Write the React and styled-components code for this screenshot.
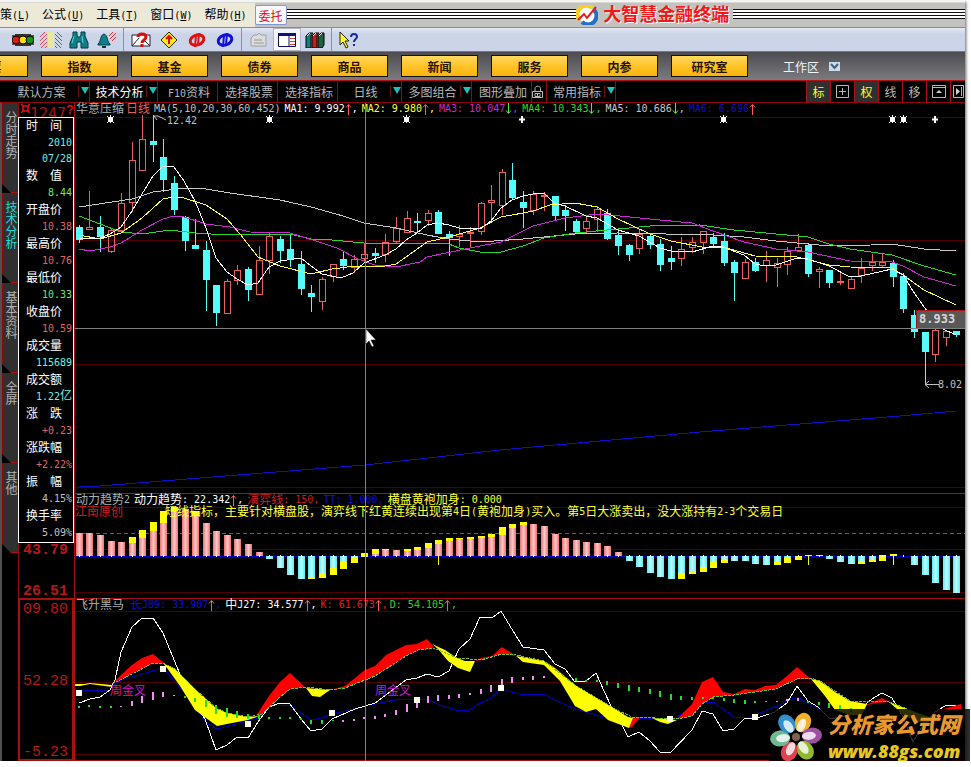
import React from "react";
import styled, { createGlobalStyle, css } from "styled-components";

const CJK = `"Liberation Sans", "Noto Sans CJK SC", sans-serif`;
const MONO = `"DejaVu Sans Mono", "Noto Sans CJK SC", monospace`;

const menus = [
  ["策", "L"],
  ["公式", "U"],
  ["工具", "T"],
  ["窗口", "W"],
  ["帮助", "H"],
];

const sections = ["股票", "指数", "基金", "债券", "商品", "新闻", "服务", "内参", "研究室"];

const views = [
  { label: "默认方案", width: 88, drop: true },
  { label: "技术分析", width: 68, drop: true, active: true },
  { label: "F10资料", width: 60 },
  { label: "选择股票", width: 60 },
  { label: "选择指标", width: 60 },
  { label: "日线", width: 64, drop: true },
  { label: "多图组合", width: 70, drop: true },
  { label: "图形叠加", width: 60 },
  { label: "lock", width: 15 },
  { label: "常用指标", width: 69, drop: true },
];

const sideTabs = [
  { label: "分时走势" },
  { label: "技术分析", active: true },
  { label: "基本资料" },
  { label: "全屏" },
  { label: "其他" },
];

const colors = {
  cyan: "#54fcfc",
  red: "#ff5c5c",
  green: "#54e454",
  grey: "#c0c0c0",
};

const quote = [
  ["时　间", ["2010", "07/28"], "#6ff0e0"],
  ["数　值", ["8.44"], "#6fe46f"],
  ["开盘价", ["10.38"], "#e06464"],
  ["最高价", ["10.76"], "#e06464"],
  ["最低价", ["10.33"], "#6fe46f"],
  ["收盘价", ["10.59"], "#e06464"],
  ["成交量", ["115689"], "#6ff0e0"],
  ["成交额", ["1.22亿"], "#6ff0e0"],
  ["涨　跌", ["+0.23"], "#e06464"],
  ["涨跌幅", ["+2.22%"], "#e06464"],
  ["振　幅", ["4.15%"], "#c0c0c0"],
  ["换手率", ["5.09%"], "#c0c0c0"],
];

const averages = [
  ["MA1: 9.992", "up", "#ffffff"],
  ["MA2: 9.980", "up", "#ffff40"],
  ["MA3: 10.047", "down", "#c828d0"],
  ["MA4: 10.343", "down", "#28d828"],
  ["MA5: 10.686", "down", "#c8c8c8"],
  ["MA6: 6.696", "up", "#1010c8"],
];

// rising flag, high, body top, body bottom, low
const candles = [
  [0, 225, 227, 240, 243], [1, 191, 227, 230, 230], [0, 216, 227, 237, 252],
  [1, 228, 230, 252, 253], [1, 193, 203, 231, 233], [1, 142, 160, 203, 212],
  [1, 115, 139, 171, 171], [0, 115, 141, 145, 162], [0, 139, 157, 180, 192],
  [0, 176, 183, 210, 215], [0, 216, 217, 241, 251], [0, 219, 245, 249, 249],
  [0, 241, 250, 280, 311], [0, 285, 285, 313, 326], [1, 279, 281, 314, 314],
  [1, 265, 270, 281, 285], [0, 267, 269, 290, 301], [1, 246, 260, 295, 295],
  [1, 232, 236, 261, 274], [0, 236, 239, 251, 263], [0, 233, 249, 259, 267],
  [0, 251, 264, 289, 295], [0, 285, 293, 297, 312], [1, 277, 279, 302, 310],
  [1, 264, 264, 277, 282], [0, 252, 259, 266, 270], [1, 255, 259, 268, 273],
  [1, 243, 254, 259, 263], [0, 248, 253, 256, 263], [1, 234, 242, 255, 262],
  [1, 217, 228, 242, 243], [1, 211, 218, 233, 233], [0, 213, 221, 223, 233],
  [1, 210, 213, 221, 226], [0, 210, 212, 234, 234], [0, 231, 234, 238, 256],
  [1, 225, 234, 237, 247], [1, 227, 232, 234, 247], [1, 202, 203, 232, 235],
  [1, 185, 200, 203, 222], [1, 169, 172, 206, 215], [0, 163, 180, 198, 200],
  [0, 191, 202, 208, 228], [1, 191, 194, 211, 215], [1, 192, 195, 197, 211],
  [0, 196, 196, 216, 221], [0, 205, 210, 216, 231], [0, 219, 221, 232, 232],
  [1, 215, 221, 229, 233], [1, 206, 209, 220, 232], [0, 209, 213, 239, 240],
  [0, 229, 235, 246, 255], [0, 244, 245, 255, 261], [1, 230, 234, 249, 254],
  [0, 235, 236, 245, 249], [0, 239, 244, 265, 271], [0, 246, 258, 262, 270],
  [1, 237, 249, 259, 266], [1, 237, 242, 248, 253], [1, 231, 231, 243, 254],
  [0, 233, 237, 244, 247], [0, 233, 241, 263, 266], [0, 260, 262, 273, 301],
  [1, 259, 262, 279, 279], [0, 258, 262, 271, 272], [1, 251, 260, 266, 282],
  [1, 258, 263, 268, 287], [1, 247, 251, 265, 275], [1, 234, 247, 251, 251],
  [0, 243, 245, 274, 277], [1, 267, 269, 272, 288], [0, 270, 270, 283, 288],
  [1, 272, 281, 283, 285], [1, 277, 279, 289, 289], [1, 258, 268, 276, 283],
  [1, 254, 262, 266, 271], [1, 254, 262, 266, 267], [0, 260, 263, 277, 287],
  [0, 273, 276, 309, 313], [0, 310, 315, 332, 338], [0, 332, 332, 352, 384],
  [1, 328, 330, 355, 362], [1, 330, 331, 338, 346], [0, 331, 331, 335, 337],
];

const lines = [
  ["#c8c8c8", "79,207 132,199 153,192 185,188 200,188 230,193 280,200 311,207 343,216 364,223 396,228 427,235 449,239 480,242 523,239 575,234 618,233 713,235 744,237 776,241 808,244 829,246 871,245 892,244 924,249 956,251"],
  ["#28d828", "79,216 100,224 121,232 142,234 170,230 195,233 227,235 260,234 290,234 311,239 332,240 364,243 449,244 459,248 480,252 501,252 523,246 544,238 575,233 618,229 650,226 700,225 734,230 808,237 829,244 850,249 892,255 924,266 956,275"],
  ["#d028d8", "79,249 90,251 110,247 121,243 142,230 163,219 174,216 184,217 206,224 230,227 250,232 290,233 316,241 337,248 358,259 375,265 396,267 420,262 427,257 470,248 501,242 523,231 533,226 565,218 597,214 620,216 660,220 692,223 713,231 744,242 776,249 808,252 850,261 892,262 903,266 924,277 956,286"],
  ["#ffff40", "79,235 100,239 121,233 142,218 163,199 174,197 184,198 206,205 227,219 240,234 258,257 280,266 311,274 332,269 355,266 380,267 396,264 406,257 427,242 449,237 480,228 501,217 523,213 533,211 550,205 575,203 597,207 618,219 650,234 671,241 702,247 723,247 755,256 797,257 829,265 850,267 892,268 903,275 924,290 956,305"],
  ["#ffffff", "79,238 100,238 110,234 121,227 132,211 142,194 153,176 163,166 174,167 184,181 195,201 206,228 216,258 227,272 237,279 248,285 258,283 269,267 280,261 301,258 311,266 322,274 341,278 353,273 364,263 385,255 396,249 406,240 417,233 427,225 438,223 449,225 459,228 480,229 491,221 501,208 512,200 523,196 533,194 544,193 554,203 565,206 586,216 597,218 618,230 639,236 660,248 671,251 692,252 713,246 723,247 744,255 755,264 765,266 776,265 797,258 808,259 829,266 850,277 861,276 892,269 903,275 913,291 924,307 943,329 956,335"],
  ["#1010c8", "79,487 100,486 200,478 365,465 500,450 600,441 700,432 800,424 900,416 956,411"],
];

// far end of the bar, inner edge of the yellow cap (same value when there is none)
const momentum = [
  [533, 533], [533, 533], [535, 535], [541, 541], [542, 542], [537, 543],
  [530, 538], [522, 531], [511, 523], [507, 511], [509, 509], [511, 516],
  [523, 523], [531, 531], [535, 535], [539, 539], [544, 544], [552, 552],
  [559, 559], [568, 568], [575, 575], [579, 579], [579, 577], [578, 573],
  [575, 568], [569, 562], [563, 557], [553, 557], [549, 554], [549, 550],
  [550, 550], [549, 551], [547, 550], [543, 548], [540, 544], [538, 541],
  [538, 539], [537, 539], [536, 538], [534, 537], [527, 535], [524, 528],
  [522, 525], [524, 524], [526, 526], [534, 534], [538, 538], [540, 540],
  [542, 542], [543, 543], [546, 546], [552, 552], [561, 561], [567, 567],
  [573, 573], [577, 577], [579, 579], [579, 573], [574, 571], [572, 567],
  [568, 562], [563, 560], [561, 561], [561, 561], [564, 564], [565, 565],
  [565, 562], [563, 558], [560, 556], [555, 556], [555, 556], [559, 559],
  [562, 562], [564, 564], [564, 561], [562, 560], [561, 555], [554, 556],
  [556, 556], [565, 565], [575, 575], [583, 583], [590, 590], [593, 593],
];

// index, top, height
const pinkTicks = [
  [4, 706, 1], [5, 701, 5], [6, 696, 7], [7, 692, 8], [8, 692, 5], [9, 695, 1],
  [25, 720, 2], [26, 719, 2], [27, 717, 2], [28, 716, 3], [29, 714, 3], [30, 710, 5],
  [31, 704, 8], [32, 699, 9], [33, 696, 7], [34, 695, 6], [35, 695, 4], [36, 694, 4],
  [37, 693, 2], [38, 689, 5], [39, 685, 7], [40, 679, 8], [41, 677, 6], [42, 677, 3],
  [43, 676, 4], [44, 676, 2], [66, 701, 1], [67, 699, 2], [68, 698, 3],
];

const greenTicks = [
  [0, 706, 2], [1, 705, 2], [2, 706, 2], [3, 706, 2], [10, 696, 2], [11, 698, 4],
  [12, 700, 7], [13, 705, 9], [14, 708, 9], [15, 711, 7], [16, 714, 5], [17, 715, 4],
  [18, 717, 2], [19, 717, 2], [20, 717, 2], [21, 718, 2], [22, 720, 4], [23, 720, 4],
  [24, 720, 1], [47, 678, 3], [48, 680, 2], [49, 680, 2], [50, 681, 4], [51, 683, 5],
  [52, 685, 6], [53, 687, 5], [54, 689, 5], [55, 691, 6], [56, 694, 6], [57, 696, 4],
  [58, 697, 3], [59, 697, 2], [60, 697, 2], [61, 698, 3], [62, 699, 4], [63, 700, 4],
  [64, 701, 2], [65, 701, 1], [69, 701, 2], [70, 702, 3], [71, 703, 5], [72, 705, 5],
  [73, 708, 4],
];

const redBands = [
  "113,683 121,675 132,665 142,658 153,654 165,664 153,663 132,674",
  "256,716 269,696 280,682 290,673 305,687 290,689 280,697 262,714",
  "330,690 345,686 365,670 375,666 386,655 406,645 417,644 427,639 434,647 430,649 418,650 406,656 375,676 345,688",
  "475,661 481,658 492,656 502,647 516,656 502,654 481,660",
  "633,718 640,717 632,727 629,728",
  "677,719 692,704 702,682 713,677 723,692 734,694 745,689 755,690 765,686 776,685 787,676 797,667 811,679 797,679 776,689 734,695 713,697 702,704 692,716",
  "864,706 882,698 889,702 876,703",
  "930,716 940,710 961,704 961,709 940,712",
];

const yellowBands = [
  "75,684 84,684 90,683 112,685 112,687 90,684 80,686 75,686",
  "163,663 175,669 195,689 216,708 227,713 248,717 260,716 248,720 232,723 217,726 195,710 180,686 167,668",
  "306,688 330,690 320,697 312,696",
  "432,644 445,650 457,658 465,661 475,661 470,672 458,668 448,661 438,649",
  "516,656 544,661 555,668 575,685 600,700 615,709 628,717 633,718 629,728 608,720 596,709 586,712 575,706 560,681 544,665 523,662",
  "652,718 677,720 668,724 660,722",
  "811,679 820,681 835,692 850,701 867,704 862,715 850,715 835,710 825,696",
  "889,702 910,710 935,719 925,724 905,716",
];

const xOf = (i) => Math.floor(79.4 + i * 10.57);

const Mixed = ({ text }) =>
  text
    .split(/([\x20-\x7e]+)/)
    .filter(Boolean)
    .map((part, i) =>
      /^[\x20-\x7e]/.test(part) ? <Half key={i}>{part}</Half> : <span key={i}>{part}</span>
    );

const Trend = ({ dir }) => (
  <TrendSvg viewBox="0 0 7 12">
    <path
      d={dir === "up" ? "M3.5 12V2M1 4.500 3.500 1.500 6 4.500" : "M3.5 0V10M1 7.500 3.500 10.500 6 7.500"}
      fill="none"
      stroke={dir === "up" ? colors.red : colors.green}
    />
  </TrendSvg>
);

const Grid = ({ ys, color = "#500000" }) =>
  ys.map((y) => <path key={y} d={`M75 ${y}.5H965`} stroke={color} />);

const CandleChart = () => (
  <Plot $height={378} viewBox="75 115 890 378" preserveAspectRatio="none">
    <Grid ys={[117, 240, 364, 487]} />
    {candles.map(([up, high, top, bottom, low], i) => {
      const x = xOf(i);
      return up ? (
        <g key={i} stroke="#e86060" fill="none">
          <path d={`M${x + 0.5} ${high}V${top}M${x + 0.5} ${bottom}V${low}`} />
          <rect x={x - 2.5} y={top + 0.5} width="6" height={Math.max(bottom - top - 1, 1)} />
        </g>
      ) : (
        <g key={i} fill={colors.cyan}>
          <rect x={x} y={high} width="1" height={low - high} />
          <rect x={x - 3} y={top} width="7" height={bottom - top} />
        </g>
      );
    })}
    {lines.map(([color, points]) => (
      <polyline key={color} points={points} fill="none" stroke={color} shapeRendering="crispEdges" />
    ))}
    {[110, 269, 406, 723, 892, 903].map((x) => (
      <g key={x} stroke="#fff">
        <rect x={x - 2} y="117" width="5" height="5" fill="#fff" stroke="none" />
        <path d={`M${x - 3} 116l7 7M${x + 4} 116l-7 7M${x + 0.5} 115v8`} />
      </g>
    ))}
    {[522, 935].map((x) => (
      <path key={x} d={`M${x} 116v7M${x - 3} 119.500h6`} stroke="#fff" strokeWidth="2" />
    ))}
    <path d="M154 116h4l8 4M154 116l3 4" stroke="#c0c0c0" fill="none" />
    <ChartText x="167" y="124">12.42</ChartText>
    <path d="M939 384.500H925M929 381l-4 3.500 4 3.500" stroke="#c0c0c0" fill="none" />
    <ChartText x="938" y="388">8.02</ChartText>
  </Plot>
);

const MomentumChart = () => (
  <Plot $height={92} viewBox="75 506 890 92" preserveAspectRatio="none">
    <defs>
      <linearGradient id="rise">
        <stop offset="0" stopColor="#f07070" />
        <stop offset="0.5" stopColor="#ffc8c8" />
        <stop offset="1" stopColor="#f07070" />
      </linearGradient>
      <linearGradient id="fall">
        <stop offset="0" stopColor="#60e8f8" />
        <stop offset="0.5" stopColor="#b8ffff" />
        <stop offset="1" stopColor="#60e8f8" />
      </linearGradient>
    </defs>
    <Grid ys={[507, 549, 592]} />
    <path d="M75 533.500H965" stroke="#e82028" strokeDasharray="4 3" />
    <path d="M75 556.500H956" stroke="#0000c8" />
    {momentum.map(([end, cap], i) => (
      <g key={i}>
        <rect
          x={xOf(i) - 3}
          y={Math.min(cap, 556)}
          width="7"
          height={Math.abs(556 - cap)}
          fill={cap < 556 ? "url(#rise)" : "url(#fall)"}
        />
        <rect x={xOf(i) - 3} y={Math.min(end, cap)} width="7" height={Math.abs(end - cap)} fill="#ffff00" />
        <rect x={xOf(i)} y="555" width="1" height="2" fill="#fff" />
      </g>
    ))}
    {[34, 69, 77].map((i) => (
      <path key={i} d={`M${xOf(i) + 0.5} 556V565`} stroke="#ffff00" />
    ))}
  </Plot>
);

const HorseChart = () => (
  <Plot $height={149} viewBox="75 611 890 149" preserveAspectRatio="none">
    <Grid ys={[611, 682, 754]} />
    <g fill="none" shapeRendering="crispEdges">
      <polyline
        stroke="#0000b8"
        points="79,691 110,690 118,681 163,668 190,699 205,722 217,729 240,723 258,718 269,706 290,705 301,713 311,720 322,718 332,714 375,704 395,700 427,699 440,705 459,711 470,710 480,703 490,699 501,689 523,695 544,694 555,700 575,709 600,716 660,719 675,718 692,708 702,702 713,702 723,709 734,717 750,717 770,709 797,697 808,703 820,709"
      />
      <polyline
        stroke="#ffffff"
        points="79,703 90,699 100,697 110,690 115,680 121,652 132,627 142,618 153,618 163,633 179,672 192,700 205,719 216,750 227,745 237,737 248,738 258,722 269,707 280,703 290,704 301,719 311,731 322,729 332,719 355,709 375,703 390,692 406,680 417,678 427,674 438,677 449,671 459,649 470,639 480,617 492,618 501,611 513,631 523,647 544,650 555,664 565,669 575,682 586,681 596,673 604,691 612,708 622,725 628,737 639,732 650,741 660,752 670,753 692,730 702,711 713,714 723,731 734,729 744,719 760,717 775,712 787,703 797,686 808,701 818,707 830,719 850,715 862,707 872,699 882,693 892,698 903,717 913,742 922,727 935,712 945,706 956,705"
      />
    </g>
    {redBands.map((points) => (
      <polygon key={points} points={points} fill="#ff0000" />
    ))}
    {yellowBands.map((points) => (
      <polygon key={points} points={points} fill="#ffff00" />
    ))}
    <polyline
      fill="none"
      stroke="#78c020"
      strokeDasharray="3 1"
      shapeRendering="crispEdges"
      points="112,684 132,674 153,663 165,664 175,669 195,689 216,708 227,713 248,717 262,714 280,697 290,689 308,687 330,690 345,688 375,676 406,656 418,650 434,648 457,658 481,660 502,654 516,655 544,661 575,685 615,709 632,717 677,719 692,716 702,704 713,697 734,695 776,689 797,679 811,678 820,681 850,701 889,702 910,710"
    />
    {pinkTicks.map(([i, y, h]) => (
      <rect key={i} x={xOf(i) - 1} y={y} width="2" height={h} fill="#f090f0" />
    ))}
    {greenTicks.map(([i, y, h]) => (
      <rect key={i} x={xOf(i) - 1} y={y} width="2" height={h} fill="#20e020" />
    ))}
    {[[79, 693], [163, 669], [248, 724], [332, 713], [417, 700], [501, 688], [670, 719], [755, 717]].map(([x, y]) => (
      <rect key={x} x={x - 3} y={y - 3} width="6" height="6" fill="#fffff0" />
    ))}
    <ChartText $pink x="110" y="695">周金叉</ChartText>
    <ChartText $pink x="375" y="695">周金叉</ChartText>
  </Plot>
);

const tools = [
  [
    ["行情", <svg key="i" width="22" height="14" viewBox="0 0 22 14">
      <path d="M0 2h22v2H0zM0 10h22v2H0z" fill="#555" />
      <path d="M3 1h16v12H3z" fill="#333" />
      <circle cx="4" cy="7" r="4" fill="#e01818" stroke="#000" />
      <circle cx="11" cy="7" r="4" fill="#ffe000" stroke="#000" />
      <circle cx="18" cy="7" r="4" fill="#189018" stroke="#000" />
    </svg>],
    ["分栏", <svg key="i" width="22" height="16" viewBox="0 0 22 16">
      <path d="M0 5l5-5M0 9l7-7M0 13l7-7M1 16l6-6M5 16l2-2" stroke="#d84858" />
      <path d="M8 0h6v16H8z" fill="#e8e8a0" />
      <path d="M17 0l5 5M15 2l7 7M15 6l7 7M15 10l6 6M15 14l2 2" stroke="#308060" />
    </svg>],
    ["查找", <svg key="i" width="20" height="18" viewBox="0 0 20 18">
      <path d="M4 1h4v3l1 2h2l1-2V1h4v4l3 7v5h-7v-6H8v6H1v-5l3-7z" fill="#108088" stroke="#003c44" />
      <path d="M5 5l-2 7M13 5l1 7" stroke="#60d8d8" />
    </svg>],
    ["预警", <svg key="i" width="20" height="18" viewBox="0 0 20 18">
      <path d="M1 13c3-2 2-9 6-10 4 1 3 8 6 10v1H1z" fill="#108088" stroke="#003c44" />
      <path d="M5 15h4v2H5z" fill="#003c44" />
      <path d="M12 5l4-4M13 8l6-6M15 10l4-4" stroke="#e03030" />
    </svg>],
  ],
  [
    ["问答", <svg key="i" width="20" height="16" viewBox="0 0 20 16">
      <path d="M1 3h18v11H1z" fill="#fff" stroke="#223" />
      <path d="M1 14l7-8M19 14l-5-5" stroke="#223" />
      <path d="M7 5c0-4 8-4 8 0 0 3-4 3-4 6M11 12v3" stroke="#d81010" strokeWidth="3" fill="none" />
    </svg>],
    ["提示", <svg key="i" width="18" height="18" viewBox="0 0 18 18">
      <path d="M9 1l8 8-8 8-8-8z" fill="#ffe820" stroke="#332800" />
      <path d="M9 13V6M6 8l3-3 3 3" stroke="#d81010" strokeWidth="2" fill="none" />
    </svg>],
    ["红环", <svg key="i" width="18" height="16" viewBox="0 0 18 16">
      <ellipse cx="9" cy="8" rx="7" ry="5" fill="none" stroke="#e01010" strokeWidth="3" transform="rotate(-20 9 8)" />
      <path d="M7 15l1-12M10 13l1-12" stroke="#e01010" strokeWidth="2" />
    </svg>],
    ["蓝环", <svg key="i" width="18" height="16" viewBox="0 0 18 16">
      <ellipse cx="9" cy="8" rx="7" ry="5" fill="none" stroke="#1010d8" strokeWidth="3" transform="rotate(-20 9 8)" />
      <path d="M7 15l1-12M10 13l1-12" stroke="#1010d8" strokeWidth="2" />
    </svg>],
  ],
  [
    ["记事", <svg key="i" width="20" height="16" viewBox="0 0 20 16">
      <path d="M2 6l3-3h3l2-2 2 2h5v11H2z" fill="#dcdcdc" stroke="#a0a0a0" />
      <path d="M5 8h8M5 11h10" stroke="#999" />
    </svg>],
    ["窗口", <svg key="i" width="18" height="14" viewBox="0 0 18 14">
      <path d="M.5.5h17v13H.5z" fill="#fff" stroke="#101060" />
      <path d="M0 0h18v3H0z" fill="#101080" />
      <path d="M11 3v11" stroke="#101060" />
      <path d="M12 5.500h5M12 8.500h5M12 11.500h5" stroke="#d04040" />
    </svg>],
    ["资料", <svg key="i" width="20" height="16" viewBox="0 0 20 16">
      <path d="M1 4l3-3h4l-2 3v12H1z" fill="#108080" stroke="#000" />
      <path d="M7 4l3-3h4l-2 3v12H7z" fill="#c02020" stroke="#000" />
      <path d="M13 4l3-3h3v12l-2 3h-4z" fill="#206040" stroke="#000" />
      <path d="M2 4l3-3M8 4l3-3M14 4l3-3" stroke="#f0f0e0" />
    </svg>],
  ],
  [
    ["帮助", <svg key="i" width="20" height="18" viewBox="0 0 20 18">
      <path d="M1 1v13l3-3 3 6 2-1-3-6h4z" fill="#ffff20" stroke="#222" />
      <path d="M12 6c0-4 6-4 6 0 0 2-3 2-3 5M15 13v2" stroke="#1828a0" strokeWidth="2" fill="none" />
    </svg>],
  ],
];

const petals = ["#f0b030", "#a050a0", "#90b830", "#e04050", "#70b890", "#3090d0"];

const Watermark = () => (
  <Mark>
    <svg width="54" height="50" viewBox="-27 -25 54 50">
      {petals.map((fill, i) => (
        <g key={fill} transform={`rotate(${i * 60 + 25})`}>
          <ellipse cx="0" cy="-16" rx="8" ry="10" fill={fill} />
          <ellipse cx="0" cy="-13" rx="4" ry="7" fill="#fff" opacity="0.8" />
        </g>
      ))}
      <circle r="4" fill="#806050" />
    </svg>
    <MarkText>
      <MarkName>分析家公式网</MarkName>
      <MarkUrl href="#home">www.88gs.com</MarkUrl>
    </MarkText>
  </Mark>
);

const App = () => (
  <>
    <GlobalStyle />
    <Terminal>
      <TopEdge />
      <MenuBar>
        <Menus>
          {menus.map(([name, key]) => (
            <MenuButton key={name}>
              {name}
              <Half>
                (<u>{key}</u>)
              </Half>
            </MenuButton>
          ))}
        </Menus>
        <TradeButton>委托</TradeButton>
        <Stripes />
        <Brand>
          <svg width="22" height="20" viewBox="0 0 22 20">
            <circle cx="11" cy="10" r="8" fill="#fff" />
            <path d="M4 15A8 8 0 0 1 16 3" fill="none" stroke="#f8d020" strokeWidth="4" />
            <path d="M18 5A8 8 0 0 1 6 17" fill="none" stroke="#2070c8" strokeWidth="4" />
            <path d="M2 15l6-6 3 4 9-11" fill="none" stroke="#e02020" strokeWidth="2" />
          </svg>
          大智慧金融终端
        </Brand>
        <Stripes />
      </MenuBar>
      <Toolbar>
        {tools.map((group, g) => (
          <ToolGroup key={g}>
            {group.map(([name, icon]) => (
              <ToolButton key={name} aria-label={name} $pressed={name === "窗口"}>
                {icon}
              </ToolButton>
            ))}
          </ToolGroup>
        ))}
      </Toolbar>
      <SectionBar>
        {sections.map((name) => (
          <SectionButton key={name}>{name}</SectionButton>
        ))}
        <Workspace>
          工作区
          <svg width="11" height="9" viewBox="0 0 11 9">
            <path d="M0 0h11v9H0z" fill="#c8dcec" />
            <path d="M2 2l3.500 4L9 2" fill="none" stroke="#486078" strokeWidth="2" />
          </svg>
        </Workspace>
      </SectionBar>
      <ViewBar>
        {views.map(({ label, width, drop, active }) => (
          <ViewButton key={label} $width={width} $active={active} aria-label={label}>
            {label === "lock" ? (
              <svg width="12" height="14" viewBox="0 0 12 14">
                <path d="M3 6V3.500C3 .5 8.500.5 8.500 3.500V6M.5 6.500h10v6H.5zM5.500 8v3M3 8.500h5v3H3z" fill="none" stroke="#b8b8b8" />
              </svg>
            ) : (
              <ViewLabel>
                <Mixed text={label} />
              </ViewLabel>
            )}
            {drop && <Drop />}
          </ViewButton>
        ))}
        <Modes>
          <ModeButton $on>标</ModeButton>
          <ModeButton aria-label="网格">
            <svg width="13" height="13" viewBox="0 0 13 13">
              <path d="M.5.5h12v12H.5zM6.500 3v7M3 6.500h7" fill="none" stroke="#b8b8b8" />
            </svg>
          </ModeButton>
          <ModeButton $on>权</ModeButton>
          <ModeButton>线</ModeButton>
          <ModeButton>移</ModeButton>
          <ModeButton aria-label="收起">
            <svg width="14" height="13" viewBox="0 0 14 13">
              <path d="M.5.5h13v12H.5zM0 2.500h14" fill="none" stroke="#b8b8b8" />
              <path d="M4 8l3-3 3 3z" fill="#d0d0d0" />
            </svg>
          </ModeButton>
          <ModeButton $last aria-label="下一个">
            <svg width="11" height="13" viewBox="0 0 11 13">
              <path d="M.5.5h10v12H.5zM8.500 2v9" fill="none" stroke="#b8b8b8" />
              <path d="M3 3l4 3.500L3 10z" fill="#d0d0d0" />
            </svg>
          </ModeButton>
        </Modes>
      </ViewBar>
      <Body>
        <SideTabs>
          {sideTabs.map(({ label, active }) => (
            <SideTab key={label} $active={active}>
              {label}
            </SideTab>
          ))}
        </SideTabs>
        <Axis>
          <AxisTop>
            <svg width="9" height="9" viewBox="0 0 9 9">
              <path d="M2 2h5v5H2zM0 0l2 2M9 0L7 2M0 9l2-2M9 9L7 7" fill="none" stroke="#f01010" strokeWidth="1.500" />
            </svg>
            <Cut>1247</Cut>
            <b>?</b>
          </AxisTop>
          <Quote>
            {quote.map(([name, values, color]) => (
              <React.Fragment key={name}>
                <dt>{name}</dt>
                <Value $color={color}>
                  {values.map((v) => (
                    <div key={v}>
                      <Mixed text={v} />
                    </div>
                  ))}
                </Value>
              </React.Fragment>
            ))}
          </Quote>
          <Scale>
            <span>43.79</span>
            <span>26.51</span>
          </Scale>
          <ScaleBox>
            <span>09.80</span>
            <span>52.28</span>
            <span>-5.23</span>
          </ScaleBox>
        </Axis>
        <Charts>
          <Pane>
            <Legend>
              <Item $color="#a8b4b4">华意压缩</Item>
              <Item $color="#e86060" $gap={2}>日线</Item>
              <Item $color="#c0c0c0" $gap={4}>
                <Mixed text="MA(5,10,20,30,60,452)" />
              </Item>
              {averages.map(([text, dir, color]) => (
                <Item key={text} $color={color} $gap={4}>
                  <Mixed text={text} />
                  <Trend dir={dir} />
                  {text !== "MA6: 6.696" && <Half>,</Half>}
                </Item>
              ))}
            </Legend>
            <CandleChart />
          </Pane>
          <Pane>
            <Legend>
              <Item $color="#a8b4b4">
                <Mixed text="动力趋势2" />
              </Item>
              <Item $color="#fff" $gap={4}>
                <Mixed text="动力趋势: 22.342" />
                <Trend dir="up" />
                <Half>,</Half>
              </Item>
              <Item $color="#c82020" $gap={4}>
                <Mixed text="演弈线: 150," />
              </Item>
              <Item $color="#1010c8" $gap={4}>
                <Mixed text="TT: 1.000," />
              </Item>
              <Item $color="#ffff40" $gap={4}>
                <Mixed text="横盘黄袍加身: 0.000" />
              </Item>
            </Legend>
            <MomentumChart />
            <Note>
              <Item $color="#c82020">江南原创</Item>
              <Item $color="#ffff40" $gap={42}>
                <Mixed text="短线指标，主要针对横盘股，演弈线下红黄连续出现第4日(黄袍加身)买入。第5日大涨卖出，没大涨持有2-3个交易日" />
              </Item>
            </Note>
          </Pane>
          <Pane>
            <Legend>
              <Item $color="#a8b4b4">飞升黑马</Item>
              <Item $color="#1010c8" $gap={6}>
                <Mixed text="长J89: 33.907" />
                <Trend dir="up" />
                <Half>,</Half>
              </Item>
              <Item $color="#fff" $gap={4}>
                <Mixed text="中J27: 34.577" />
                <Trend dir="up" />
                <Half>,</Half>
              </Item>
              <Item $color="#e02020" $gap={4}>
                <Mixed text="K: 61.673" />
                <Trend dir="up" />
                <Half>,</Half>
              </Item>
              <Item $color="#28d828" $gap={2}>
                <Mixed text="D: 54.105" />
                <Trend dir="up" />
                <Half>,</Half>
              </Item>
            </Legend>
            <HorseChart />
          </Pane>
          <CrossX />
          <CrossY>
            <Price>8.933</Price>
          </CrossY>
          <Pointer viewBox="0 0 12 20">
            <path d="M1 1v15l3-3 3 6 2-1-3-6h5z" fill="#fff" stroke="#000" strokeWidth="0.500" />
          </Pointer>
        </Charts>
      </Body>
      <Watermark />
    </Terminal>
  </>
);

export default App;

const GlobalStyle = createGlobalStyle`
  * {
    box-sizing: border-box;
  }

  body {
    margin: 0;
    background: #ffffff;
    font-family: ${CJK};
    font-size: 12px;
  }

  button {
    padding: 0;
    border: 0;
    background: none;
    color: inherit;
    font: inherit;
    white-space: nowrap;
    cursor: pointer;
  }

  svg {
    display: block;
    flex: none;
  }
`;

const Half = styled.span`
  font-family: ${MONO};
  font-size: 10px;
  white-space: pre;
`;

const Terminal = styled.div`
  position: relative;
  margin-right: 6px;
  background: #000000;
  box-shadow: 1px 2px 3px #606060;
`;

const TopEdge = styled.div`
  height: 3px;
  background: #f4f4f2;
  border-bottom: 1px solid #d8d8d4;
`;

const MenuBar = styled.nav`
  display: flex;
  height: 25px;
  background: #c4c2be;
  border-bottom: 1px solid #8c8c88;
`;

const Menus = styled.div`
  display: flex;
  gap: 12px;
  padding-right: 8px;
  background: #ece9d8;
`;

const MenuButton = styled.button`
  color: #000000;
  line-height: 22px;
`;

const TradeButton = styled.button`
  align-self: center;
  width: 32px;
  height: 20px;
  background: #f8f8ff;
  border: 1px solid #8898c8;
  border-radius: 2px;
  color: #e01010;
`;

const Stripes = styled.div`
  flex: 289 1 0;
  height: 10px;
  margin-top: 6px;
  background: repeating-linear-gradient(#101010 0 1px, #ffffff 1px 3px);

  &:last-child {
    flex-grow: 231;
  }
`;

const Brand = styled.div`
  display: flex;
  align-items: center;
  gap: 5px;
  padding-right: 4px;
  color: #f01818;
  font-size: 18px;
  font-weight: bold;
  line-height: 22px;
  text-shadow: 1px 1px #ffffff;
`;

const Toolbar = styled.div`
  display: flex;
  height: 24px;
  padding-left: 9px;
  background: linear-gradient(#e4e8f4, #ccd4e8 6px, #ccd4ea);
  border-bottom: 1px solid #707890;
`;

const ToolGroup = styled.div`
  display: flex;

  & + & {
    margin-left: 2px;
    padding-left: 3px;
    border-left: 1px solid #8890a8;
  }
`;

const ToolButton = styled.button`
  display: flex;
  align-items: center;
  justify-content: center;
  width: 28px;

  ${(props) =>
    props.$pressed &&
    css`
      background: #f6f6fa;
      border: 1px solid #b0b4c4;
    `}
`;

const SectionBar = styled.nav`
  display: flex;
  align-items: center;
  gap: 13px;
  height: 28px;
  margin-left: -49px;
  background: linear-gradient(#4c4c50, #7c7c80);
`;

const SectionButton = styled.button`
  flex: none;
  width: 77px;
  height: 22px;
  background: linear-gradient(#ffd860, #ffc020 60%, #f8b410);
  border: 1px solid #181000;
  color: #281400;
  font-weight: bold;
`;

const Workspace = styled.button`
  display: flex;
  align-items: center;
  gap: 10px;
  margin-left: 22px;
  color: #f4f4f4;
`;

const ViewBar = styled.div`
  display: flex;
  height: 23px;
  padding-left: 2px;
  border-top: 1px solid #b01010;
  border-bottom: 1px solid #900808;
  color: #b8b8b8;
`;

const ViewButton = styled.button`
  display: flex;
  align-items: center;
  flex: none;
  width: ${(props) => props.$width}px;
  border-right: 1px solid #900808;
  color: ${(props) => (props.$active ? "#ffffff" : "#b8b8b8")};
`;

const ViewLabel = styled.span`
  flex: 1;
  padding-left: 3px;
`;

const Drop = styled.i`
  align-self: stretch;
  width: 11px;
  margin: 5px 0;
  border-left: 1px solid #701010;

  &::after {
    content: "";
    display: block;
    width: 8px;
    height: 7px;
    margin: 1px 0 0 2px;
    background: #20c0b8;
    clip-path: polygon(0 0, 100% 0, 50% 100%);
  }
`;

const Modes = styled.div`
  display: flex;
  margin-left: auto;
  border-left: 1px solid #b01010;
`;

const ModeButton = styled.button`
  display: flex;
  align-items: center;
  justify-content: center;
  width: ${(props) => (props.$last ? 14 : 24)}px;
  border-right: ${(props) => (props.$last ? 0 : "1px solid #b01010")};
  background: ${(props) => (props.$on ? "#303030" : "#000000")};
  color: ${(props) => (props.$on ? "#ffff20" : "#b8b8b8")};
`;

const Body = styled.main`
  display: flex;
`;

const SideTabs = styled.div`
  width: 18px;
  border-left: 2px solid #505050;
  flex: none;
`;

const SideTab = styled.button`
  display: block;
  position: relative;
  width: 16px;
  height: 90px;
  padding: 8px 2px 0 0;
  background: #303030;
  border-left: 1px solid #900808;
  border-bottom: 1px solid #b01010;
  color: ${(props) => (props.$active ? "#20d8d8" : "#b0b0b0")};
  line-height: 13px;
  text-align: start;
  writing-mode: vertical-rl;

  &::after {
    content: "";
    position: absolute;
    left: -1px;
    bottom: -1px;
    width: 9px;
    height: 9px;
    background: #000000;
    clip-path: polygon(0 0, 100% 100%, 0 100%);
  }
`;

const Axis = styled.aside`
  display: flex;
  flex-direction: column;
  flex: none;
  width: 56px;
`;

const AxisTop = styled.div`
  display: flex;
  justify-content: space-between;
  align-items: flex-start;
  height: 14px;
  padding: 1px 4px 0 2px;
  overflow: hidden;
  border-left: 1px solid #900808;
  color: #e01010;
  line-height: 13px;
`;

const Cut = styled.span`
  padding-top: 4px;
  font-family: ${MONO};
  font-size: 15px;
  color: #b01010;
`;

const Quote = styled.dl`
  margin: 0;
  border: 1px solid #ffffff;
  color: #ffffff;
  line-height: 16px;

  dt {
    padding-left: 7px;
    white-space: nowrap;
  }
`;

const Value = styled.dd`
  margin: 0 0 2px;
  padding-right: 1px;
  color: ${(props) => props.$color};
  text-align: right;
  white-space: nowrap;

  div {
    height: 16px;
  }
`;

const Scale = styled.div`
  display: flex;
  flex-direction: column;
  justify-content: space-between;
  height: 55px;
  padding: 2px 0 0 4px;
  overflow: hidden;
  border-left: 1px solid #900808;
  color: #b81818;
  font-family: "Liberation Mono", monospace;
  font-size: 15px;
  font-weight: bold;
  line-height: 12px;
`;

const ScaleBox = styled(Scale)`
  flex: 1;
  height: auto;
  padding: 4px 0 0 3px;
  border: 2px solid #a81010;
  font-weight: normal;
`;

const Charts = styled.div`
  position: relative;
  flex: 1;
  min-width: 0;
`;

const Pane = styled.section`
  position: relative;
  border-left: 1px solid #a81010;

  & + & {
    border-top: 1px solid #a81010;
  }

  &:nth-of-type(3) {
    border-bottom: 1px solid #a81010;
  }
`;

const Legend = styled.div`
  display: flex;
  height: 12px;
  padding-left: 1px;
  line-height: 12px;
  white-space: nowrap;
`;

const Note = styled.div`
  display: flex;
  position: absolute;
  top: 12px;
  left: 0;
  line-height: 12px;
  white-space: nowrap;
`;

const Item = styled.span`
  display: flex;
  align-items: center;
  margin-left: ${(props) => props.$gap || 0}px;
  color: ${(props) => props.$color};
`;

const TrendSvg = styled.svg`
  width: 7px;
  height: 12px;
`;

const Plot = styled.svg`
  width: 100%;
  height: ${(props) => props.$height}px;
`;

const ChartText = styled.text`
  fill: ${(props) => (props.$pink ? "#c818d0" : "#c0c0c0")};
  font-family: ${MONO};
  font-size: ${(props) => (props.$pink ? 12 : 10)}px;
`;

const CrossX = styled.div`
  position: absolute;
  top: 0;
  bottom: 0;
  left: 291px;
  width: 1px;
  background: #808080;
`;

const CrossY = styled.div`
  position: absolute;
  top: 225px;
  left: 1px;
  right: 0;
  border-top: 1px solid #808080;
`;

const Price = styled.output`
  position: absolute;
  right: 0;
  bottom: 1px;
  width: 49px;
  padding-left: 2px;
  background: #585858;
  border-top: 1px solid #a81010;
  border-left: 1px solid #a81010;
  color: #d8d8d8;
  font-family: ${MONO};
  font-weight: bold;
  line-height: 17px;
`;

const Pointer = styled.svg`
  position: absolute;
  top: 225px;
  left: 291px;
  width: 12px;
  height: 20px;
`;

const Mark = styled.div`
  display: flex;
  align-items: center;
  gap: 5px;
  position: absolute;
  right: -5px;
  bottom: -4px;
  width: 201px;
  height: 56px;
  background: rgba(0, 0, 0, 0.82);
`;

const MarkText = styled.div`
  display: flex;
  flex-direction: column;
  gap: 1px;
`;

const MarkName = styled.strong`
  color: #e89830;
  font-size: 22px;
  font-style: italic;
  font-weight: 900;
  line-height: 27px;
  white-space: nowrap;
`;

const MarkUrl = styled.a`
  color: #e8c820;
  font-family: "Open Sans", sans-serif;
  font-size: 18px;
  font-style: italic;
  font-weight: 800;
  line-height: 22px;
  text-decoration: none;
`;
